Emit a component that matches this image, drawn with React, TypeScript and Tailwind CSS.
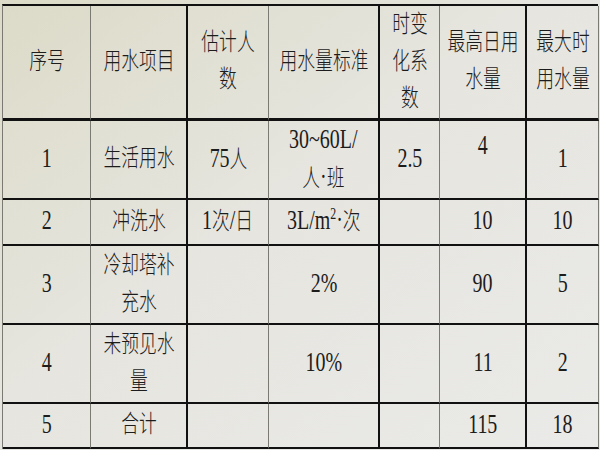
import React from 'react'

const serif = '"Liberation Serif", "Noto Sans CJK SC", serif'

// right border per column: gray / black alternating as in the sheet
const colBorder = [
  'border-r border-r-[#7a7a72]',
  'border-r-2 border-r-[#111]',
  'border-r border-r-[#7a7a72]',
  'border-r-2 border-r-[#111]',
  'border-r border-r-[#7a7a72]',
  'border-r-2 border-r-[#111]',
  'border-r border-r-[#7a7a72]',
]

const rowBorder = [
  'border-b-[3px] border-b-[#111]',
  'border-b-2 border-b-[#111]',
  'border-b-2 border-b-[#111]',
  'border-b-2 border-b-[#111]',
  'border-b-2 border-b-[#111]',
  'border-b-2 border-b-[#111]',
]

// CJK runs get a slightly smaller size than latin/digits
function T({ s }: { s: string }) {
  const parts = s.split(/([\u4e00-\u9fff]+)/).filter(Boolean)
  return (
    <>
      {parts.map((p, i) =>
        /[\u4e00-\u9fff]/.test(p) ? (
          <span key={i} className="text-[24px] font-light">{p}</span>
        ) : (
          <span key={i} className="text-[27px]">{p}</span>
        )
      )}
    </>
  )
}

function Lines({ lines }: { lines: string[] }) {
  return (
    <span className="inline-block scale-x-[0.74] whitespace-nowrap text-center leading-[34px] text-[#1c1c1c]">
      {lines.map((l, i) => (
        <span key={i} className="block">
          <T s={l} />
        </span>
      ))}
    </span>
  )
}

type Cell = string[] | React.ReactNode

const rows: Cell[][] = [
  [['序号'], ['用水项目'], ['估计人', '数'], ['用水量标准'], ['时变', '化系', '数'], ['最高日用', '水量'], ['最大时', '用水量']],
  [['1'], ['生活用水'], ['75人'], ['30~60L/', '人·班'], ['2.5'], ['4'], ['1']],
  [
    ['2'],
    ['冲洗水'],
    ['1次/日'],
    <span className="inline-block scale-x-[0.74] whitespace-nowrap leading-[34px] text-[#1c1c1c]">
      <span className="text-[27px]">3L/m</span>
      <sup className="text-[16px] -top-[0.6em]">2</sup>
      <span className="text-[27px]">·</span>
      <span className="text-[24px] font-light">次</span>
    </span>,
    [],
    ['10'],
    ['10'],
  ],
  [['3'], ['冷却塔补', '充水'], [], ['2%'], [], ['90'], ['5']],
  [['4'], ['未预见水', '量'], [], ['10%'], [], ['11'], ['2']],
  [['5'], ['合计'], [], [], [], ['115'], ['18']],
]

export default function App() {
  return (
    <div
      className="w-[600px] h-[450px] overflow-hidden bg-linear-to-br from-[#dcdbc8] via-[#e6e5df] via-45% to-[#eaeae8] pt-[4px] pl-[2px]"
      style={{ fontFamily: serif }}
    >
      <div className="grid w-[596px] grid-cols-[88px_97px_81px_111px_60px_87px_72px] grid-rows-[115px_79px_46px_79px_79px_45px] border-t-2 border-t-[#111] border-l border-l-[#7a7a72]">
        {rows.map((row, r) =>
          row.map((c, ci) => {
            const special = r === 1 && ci === 5
            return (
              <div
                key={`${r}-${ci}`}
                className={`flex justify-center ${special ? 'items-start pt-[7px]' : 'items-center'} ${colBorder[ci]} ${rowBorder[r]}`}
              >
                {Array.isArray(c) ? c.length > 0 && <Lines lines={c as string[]} /> : c}
              </div>
            )
          })
        )}
      </div>
    </div>
  )
}
